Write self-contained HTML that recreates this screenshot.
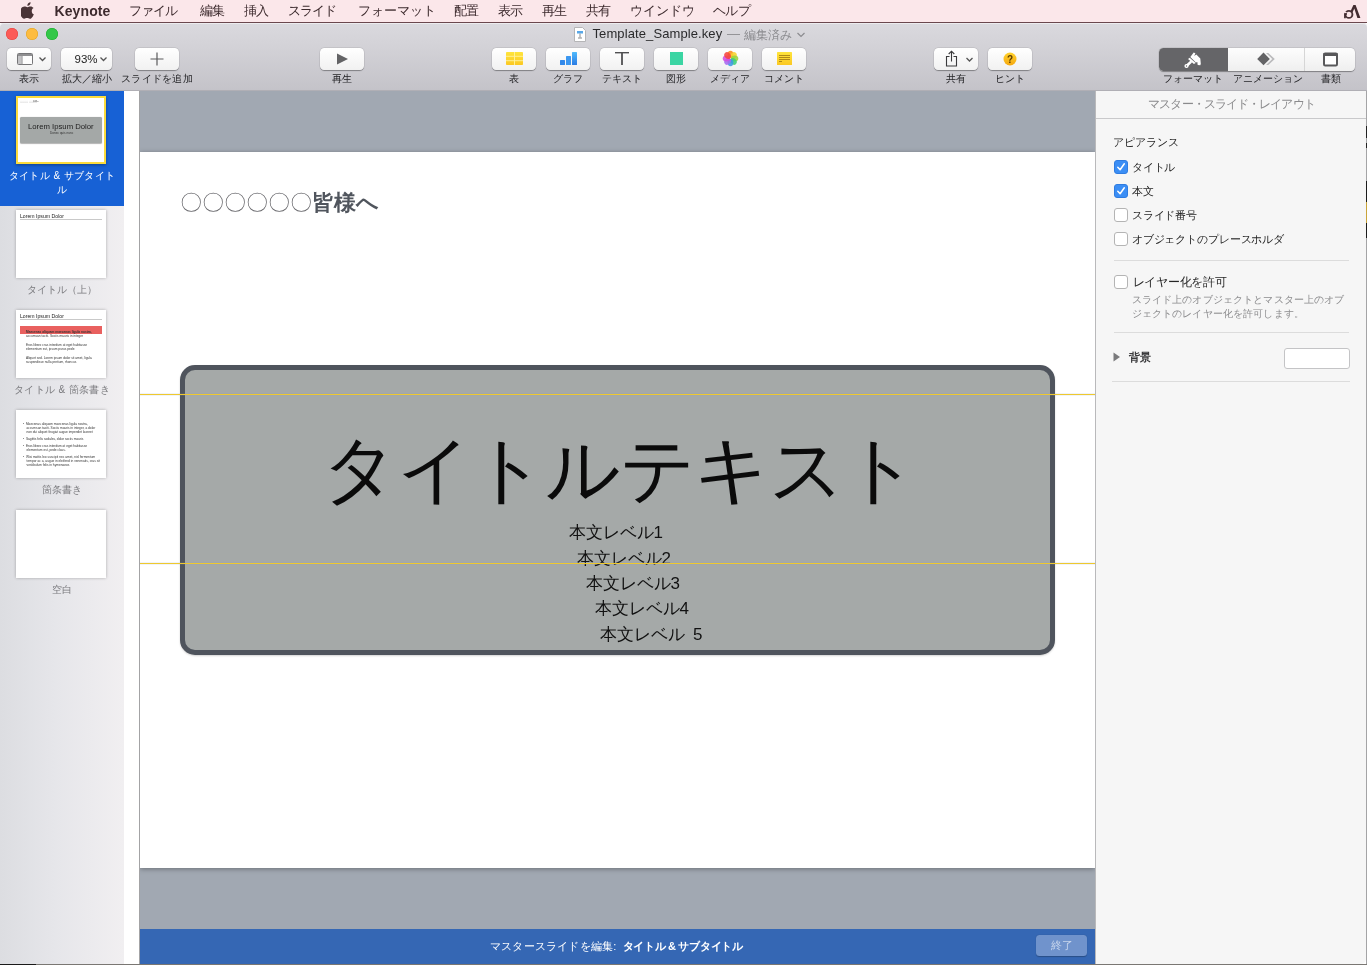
<!DOCTYPE html>
<html lang="ja">
<head>
<meta charset="utf-8">
<title>Keynote</title>
<style>
*{box-sizing:border-box;margin:0;padding:0}
html,body{width:1367px;height:965px;overflow:hidden;background:#fff}
body{font-family:"Liberation Sans",sans-serif;position:relative;color:#222;-webkit-font-smoothing:antialiased}
.abs{position:absolute}
/* menu bar */
#menubar{position:absolute;left:0;top:0;width:1367px;height:22px;background:#fbe7ea}
#menubar span{position:absolute;top:2px;font-size:13px;line-height:18px;color:#3d2b2e;white-space:nowrap}
#menuline{position:absolute;left:0;top:22px;width:1367px;height:1px;background:#6a474d}
/* window chrome */
#chrome{position:absolute;left:0;top:23px;width:1367px;height:68px;background:linear-gradient(#dad9de 0%,#d3d2d7 35%,#c4c3c9 100%);border-bottom:1px solid #b0afb5;box-shadow:inset 0 1px 0 #ececef;border-radius:4px 4px 0 0}
.tl{position:absolute;top:28px;width:12px;height:12px;border-radius:50%}
.tb{position:absolute;top:48px;height:22px;width:44px;border-radius:4.5px;background:linear-gradient(#ffffff,#f1f1f1);box-shadow:0 0.5px 1px rgba(0,0,0,.35),0 0 0 .5px rgba(0,0,0,.08)}
.tlabel{position:absolute;top:72px;font-size:10px;line-height:14px;color:#242427;white-space:nowrap;transform:translateX(-50%)}
.tb svg{position:absolute;left:0;top:0}
/* sidebar */
#sidebar{position:absolute;left:0;top:91px;width:124px;height:873px;background:linear-gradient(90deg,#dcdde1 0%,#e6e6ea 45%,#f1eff1 100%)}
#sel{position:absolute;left:0;top:0;width:124px;height:115px;background:#1761d5}
.thumb{position:absolute;left:16px;width:90px;height:68px;background:#fff;box-shadow:0 0 3px rgba(0,0,0,.28)}
.slabel{position:absolute;left:0;width:124px;text-align:center;font-size:10px;letter-spacing:.1px;word-spacing:1px;line-height:14px;color:#7a7a7e;white-space:nowrap}
/* canvas */
#gap{position:absolute;left:124px;top:91px;width:15px;height:873px;background:#fff}
#gapline{position:absolute;left:139px;top:91px;width:1px;height:873px;background:#a3a3a5}
#canvas{position:absolute;left:140px;top:91px;width:955px;height:873px;background:#a1a8b2;overflow:hidden}
#slide{position:absolute;left:0;top:61px;width:955px;height:716px;background:#fff;box-shadow:0 1px 5px rgba(0,0,0,.34)}
#box{position:absolute;left:40px;top:213px;width:875px;height:290px;border:5px solid #4f545d;border-radius:15px;background:#a5a9a8;box-shadow:0 1px 2px rgba(0,0,0,.18)}
.guide{position:absolute;left:0;width:955px;height:1px;background:#efc92e;box-shadow:0 0 0 .5px rgba(140,160,200,.25)}
#bbar{position:absolute;left:0;top:838px;width:955px;height:35px;background:#3567b4}
/* right panel */
#panel{position:absolute;left:1095px;top:91px;width:271px;height:873px;background:#f6f6f6;border-left:1px solid #b9b9bb;border-radius:0 0 5px 0}
.plabel{position:absolute;font-size:12px;line-height:16px;color:#262626;white-space:nowrap}
.cb{position:absolute;left:18px;width:14px;height:14px;border-radius:3px;background:#fff;border:1px solid #b4b4b4}
.cb.on{background:#3b8ef5;border-color:#2f7ce0}
.sep{position:absolute;left:18px;width:235px;height:1px;background:#dcdcdc}

.tiny{position:absolute;transform-origin:0 0;white-space:nowrap;color:#333;font-size:12px;line-height:15.400px}
.ttl{position:absolute;transform-origin:0 0;white-space:nowrap;color:#222}
#h1{position:absolute;left:40px;top:37px;font-size:22.400px;line-height:28px;white-space:nowrap;color:#50555d}
#h1 b{font-weight:bold}
#h1 i{font-style:normal;color:#66666a}
#big{position:absolute;left:0;top:278px;width:875px;text-align:center;font-size:73.500px;letter-spacing:-1.600px;text-indent:4.500px;line-height:80px;color:#0b0b0b;white-space:nowrap}
.lv{position:absolute;font-size:17px;letter-spacing:-.100px;line-height:24px;margin-top:1px;color:#111;white-space:nowrap}
#bbar .t{position:absolute;top:10px;font-size:11px;line-height:14px;color:#fff;white-space:nowrap}
#done{position:absolute;left:896px;top:6px;width:51px;height:21px;border-radius:3.500px;background:#7093cc;color:#c8d6ec;font-size:11px;line-height:21px;text-align:center;box-shadow:0 .5px 1px rgba(0,0,0,.25)}
</style>
</head>
<body><div id='wrap' style='position:absolute;left:0;top:0;width:1367px;height:965px;will-change:transform'>
<!-- MENU BAR -->
<div id="menubar">
<svg class="abs" style="left:21px;top:2px" width="14" height="17" viewBox="0 0 14 17"><path fill="#4a3437" d="M9.6 0.2c.1 1-.3 1.900-.85 2.550-.6.7-1.500 1.200-2.400 1.100-.1-.9.350-1.900.9-2.500C7.850.7 8.850.25 9.600.2zM12.900 12.300c-.4.900-.6 1.300-1.100 2.100-.7 1.100-1.700 2.400-2.900 2.400-1.100 0-1.400-.7-2.850-.7-1.500 0-1.800.7-2.900.7-1.200 0-2.150-1.200-2.850-2.300C-1.200 11.800-1.400 8.100.150 6.400c.8-1.200 2.100-1.900 3.300-1.900 1.250 0 2 .7 3.050.7 1 0 1.600-.7 3.050-.7 1.100 0 2.250.6 3.050 1.600-2.700 1.500-2.250 5.300.3 6.200z"/></svg>
<span style="left:54.500px;font-weight:bold;font-size:14px;letter-spacing:.1px">Keynote</span>
<span style="left:129px;letter-spacing:-1px">ファイル</span>
<span style="left:200px;letter-spacing:-1px">編集</span>
<span style="left:243.500px;letter-spacing:-.5px">挿入</span>
<span style="left:287.500px;letter-spacing:-.8px">スライド</span>
<span style="left:358px">フォーマット</span>
<span style="left:453.500px;letter-spacing:-.5px">配置</span>
<span style="left:497.500px;letter-spacing:-.5px">表示</span>
<span style="left:541.500px;letter-spacing:-.5px">再生</span>
<span style="left:585.500px;letter-spacing:-.5px">共有</span>
<span style="left:629.500px">ウインドウ</span>
<span style="left:712.500px;letter-spacing:-.5px">ヘルプ</span>
<svg class="abs" style="left:1342px;top:3px" width="22" height="17" viewBox="0 0 22 17"><circle cx="6.900" cy="11.400" r="3.500" fill="none" stroke="#4a3337" stroke-width="1.900"/><path d="M1.500 8.200l3.500 1-1.200 1.500z" fill="#fbe7ea"/><path d="M2.100 10.200h2.900v1.500h-1.200v3.600h-1.700z" fill="#432d31"/><path d="M8.500 8.200L11.400 2h2.200l4.800 13h-3L12.300 5.600 10.600 9.200z" fill="#432d31"/></svg>
</div>
<div id="menuline"></div>

<!-- WINDOW CHROME -->
<div id="chrome"></div>
<div class="tl" style="left:6px;background:#fc5b57;box-shadow:inset 0 0 0 .5px #e0443e"></div>
<div class="tl" style="left:26px;background:#fdbc40;box-shadow:inset 0 0 0 .5px #dea123"></div>
<div class="tl" style="left:46px;background:#33c748;box-shadow:inset 0 0 0 .5px #1aab29"></div>


<!-- TOOLBAR -->
<div class="tb" style="left:7px"><svg width="44" height="22"><rect x="10.500" y="5.500" width="15" height="11" rx="1" fill="#fdfdfd" stroke="#757577"/><rect x="11" y="6" width="14" height="2" fill="#8f8f91"/><rect x="11" y="8" width="3.500" height="8" fill="#c3c3c5"/><path d="M15 8v8.500" stroke="#8a8a8c" stroke-width="1"/><path d="M32.500 9.500l3 3 3-3" fill="none" stroke="#555" stroke-width="1.300"/></svg></div>
<div class="tb" style="left:61px;width:51px"><span style="position:absolute;left:13.500px;top:4px;font-size:11.500px;line-height:14px;color:#222">93%</span><svg width="51" height="22"><path d="M39.500 9.500l3 3 3-3" fill="none" stroke="#555" stroke-width="1.300"/></svg></div>
<div class="tb" style="left:135px"><svg width="44" height="22"><path d="M22 4.500v13M15.500 11h13" stroke="#5a5a5c" stroke-width="1.200"/></svg></div>
<div class="tb" style="left:320px"><svg width="44" height="22"><path d="M17 5.500l11 5.500-11 5.500z" fill="#636365"/></svg></div>
<div class="tb" style="left:492px"><svg width="44" height="22"><defs><linearGradient id="yg" x1="0" y1="0" x2="0" y2="1"><stop offset="0" stop-color="#fee43c"/><stop offset="1" stop-color="#fbc822"/></linearGradient><linearGradient id="bg2" x1="0" y1="0" x2="0" y2="1"><stop offset="0" stop-color="#4fbafc"/><stop offset="1" stop-color="#2a7be4"/></linearGradient></defs><rect x="14" y="4" width="17" height="13" rx=".8" fill="url(#yg)"/><path d="M14 8.300h17M14 12.700h17M22.500 4v13" stroke="#fff2a0" stroke-width=".9"/></svg></div>
<div class="tb" style="left:546px"><svg width="44" height="22"><rect x="14" y="12" width="5" height="5" rx=".5" fill="#3289ea"/><rect x="20" y="8" width="5" height="9" rx=".5" fill="#3b97f0"/><rect x="26" y="4" width="5" height="13" rx=".5" fill="url(#bg2)"/></svg></div>
<div class="tb" style="left:600px"><svg width="44" height="22"><path d="M15 4.700h14" stroke="#505052" stroke-width="1.400" fill="none"/><path d="M22 4.700v12.300" stroke="#505052" stroke-width="1.800" fill="none"/></svg></div>
<div class="tb" style="left:654px"><svg width="44" height="22"><rect x="16" y="4" width="13" height="13" fill="#3bd5a3"/></svg></div>
<div class="tb" style="left:708px"><svg width="44" height="22" viewBox="0 0 44 22"><g transform="translate(22.500,10.500)"><ellipse cx="0" cy="-4.100" rx="2.900" ry="3.700" fill="#fb8a1c" opacity=".88" transform="rotate(0)"/><ellipse cx="0" cy="-4.100" rx="2.900" ry="3.700" fill="#f8d22f" opacity=".88" transform="rotate(45)"/><ellipse cx="0" cy="-4.100" rx="2.900" ry="3.700" fill="#9ad43a" opacity=".88" transform="rotate(90)"/><ellipse cx="0" cy="-4.100" rx="2.900" ry="3.700" fill="#3ecf7c" opacity=".88" transform="rotate(135)"/><ellipse cx="0" cy="-4.100" rx="2.900" ry="3.700" fill="#3e9ae2" opacity=".88" transform="rotate(180)"/><ellipse cx="0" cy="-4.100" rx="2.900" ry="3.700" fill="#a66bf0" opacity=".88" transform="rotate(225)"/><ellipse cx="0" cy="-4.100" rx="2.900" ry="3.700" fill="#d04fe0" opacity=".88" transform="rotate(270)"/><ellipse cx="0" cy="-4.100" rx="2.900" ry="3.700" fill="#f6453f" opacity=".88" transform="rotate(315)"/></g></svg></div>
<div class="tb" style="left:762px"><svg width="44" height="22"><rect x="15" y="4" width="15" height="13" rx=".6" fill="url(#yg)"/><path d="M17 7.500h11M17 9.500h11M17 11.500h11M17 13.500h3" stroke="#9a7512" stroke-width=".8"/></svg></div>
<div class="tb" style="left:934px"><svg width="44" height="22"><path d="M15.500 8.500h-3v9.500h10v-9.500h-3" fill="none" stroke="#3a3a3c" stroke-width="1.100"/><path d="M17.500 13.500v-10M14.700 6l2.800-2.800 2.800 2.800" fill="none" stroke="#3a3a3c" stroke-width="1.100"/><path d="M32.500 10l3 3 3-3" fill="none" stroke="#555" stroke-width="1.300"/></svg></div>
<div class="tb" style="left:988px"><svg width="44" height="22"><defs><linearGradient id="hg" x1="0" y1="0" x2="0" y2="1"><stop offset="0" stop-color="#ffd22e"/><stop offset="1" stop-color="#f5a80f"/></linearGradient></defs><circle cx="22" cy="11" r="6.500" fill="url(#hg)"/><text x="22" y="14.500" font-size="10" font-weight="bold" text-anchor="middle" fill="#5b3c00" font-family="Liberation Sans, sans-serif">?</text></svg></div>
<div class="tb" id="seg" style="left:1159px;top:47.500px;height:23px;width:196px;background:linear-gradient(#fdfdfd,#efefef)"><div style="position:absolute;left:0;top:0;width:69px;height:23px;background:#656568;border-radius:4.500px 0 0 4.500px"></div><div style="position:absolute;left:145px;top:0;width:1px;height:23px;background:#d6d6d6"></div><svg width="196" height="23"><g fill="#fff"><path d="M31.300 9L34.700 4.400 36.400 5.300 35.200 8 37.300 6.500 41.300 10.500 41.800 15.800 41.300 17.200 38.700 17 38.300 14.100 36.900 14.400z"/><path d="M29 11L30.700 9.700 36.700 14.900 34.900 16z"/><path d="M31.600 14.100L27.500 18" stroke="#fff" stroke-width="2.600" stroke-linecap="round"/><circle cx="27.500" cy="18" r="2.100"/></g><circle cx="27.500" cy="18" r=".7" fill="#656568"/><path d="M104.500 4.600l6.300 6.300-6.300 6.300-6.300-6.300z" fill="#636365"/><path d="M109.300 4.900l6.500 6-6.500 6h-2.300l6.300-6-6.300-6z" fill="#bababc"/><rect x="165" y="5.500" width="13" height="12" rx="1.200" fill="#fff" stroke="#58585a" stroke-width="2"/><rect x="164.500" y="5" width="14" height="3" fill="#58585a"/></svg></div>

<div class="tlabel" style="left:29px">表示</div>
<div class="tlabel" style="left:86.500px">拡大／縮小</div>
<div class="tlabel" style="left:157px;letter-spacing:.3px">スライドを追加</div>
<div class="tlabel" style="left:342px">再生</div>
<div class="tlabel" style="left:514px">表</div>
<div class="tlabel" style="left:568px">グラフ</div>
<div class="tlabel" style="left:622px">テキスト</div>
<div class="tlabel" style="left:676px">図形</div>
<div class="tlabel" style="left:730px">メディア</div>
<div class="tlabel" style="left:784px">コメント</div>
<div class="tlabel" style="left:956px">共有</div>
<div class="tlabel" style="left:1010px">ヒント</div>
<div class="tlabel" style="left:1193px">フォーマット</div>
<div class="tlabel" style="left:1267.500px">アニメーション</div>
<div class="tlabel" style="left:1330.500px">書類</div>

<!-- TITLE -->
<svg class="abs" style="left:574px;top:27px" width="12" height="15" viewBox="0 0 12 15"><path d="M.5.500h8l3 3v11h-11z" fill="#fff" stroke="#b5b5b7"/><rect x="3" y="4" width="6" height="2.500" fill="#58a7e8"/><path d="M6 6.500v4M4 11h4" stroke="#8a8a8c" stroke-width="1"/></svg>
<div class="abs" style="left:592.500px;top:26px;font-size:13px;letter-spacing:.1px;line-height:16px;color:#2a2a2c;white-space:nowrap">Template_Sample.key</div><div class="abs" style="left:727px;top:26px;font-size:13px;line-height:16px;color:#8b8b8f;white-space:nowrap">—</div><div class="abs" style="left:744px;top:26.500px;font-size:12px;line-height:16px;color:#8b8b8f;white-space:nowrap">編集済み</div>
<svg class="abs" style="left:796px;top:30.500px" width="10" height="8"><path d="M1.500 2l3.500 3.500 3.500-3.500" fill="none" stroke="#8b8b8f" stroke-width="1.200"/></svg>

<!-- SIDEBAR -->
<div id="sidebar">
<div id="sel"></div>
<!-- thumb 1 -->
<div class="thumb" style="top:5px;border:2px solid #fbdb3c;box-shadow:0 1px 3px rgba(0,0,0,.35)">
 <div class="abs" style="left:2px;top:19px;width:82px;height:26px;background:#a4a8a7;border-radius:1.500px;box-shadow:0 .5px 1px rgba(0,0,0,.3)"></div>
 <div class="ttl" style="left:10px;top:23.800px;font-size:15px;line-height:18px;transform:scale(.515)">Lorem Ipsum Dolor</div>
 <div class="ttl" style="left:31.500px;top:33px;font-size:12px;line-height:14px;transform:scale(.26);color:#333">Donec quis nunc</div>
 <div class="ttl" style="left:2px;top:1.500px;font-size:12px;line-height:14px;transform:scale(.18);color:#666">〇〇〇〇〇〇<b>皆様へ</b></div>
</div>
<div class="slabel" style="top:78px;color:#fff;line-height:14px">タイトル &amp; サブタイト<br>ル</div>
<!-- thumb 2 -->
<div class="thumb" style="top:119px">
 <div class="ttl" style="left:4px;top:3px;font-size:12px;line-height:14px;transform:scale(.43)">Lorem Ipsum Dolor</div>
 <div class="abs" style="left:4px;top:9px;width:82px;height:1px;background:#c9c9c9"></div>
</div>
<div class="slabel" style="top:192px">タイトル（上）</div>
<!-- thumb 3 -->
<div class="thumb" style="top:219px">
 <div class="ttl" style="left:4px;top:3px;font-size:12px;line-height:14px;transform:scale(.43)">Lorem Ipsum Dolor</div>
 <div class="abs" style="left:4px;top:9px;width:82px;height:1px;background:#c9c9c9"></div>
 <div class="abs" style="left:4px;top:16px;width:82px;height:8px;background:#e9605f"></div>
 <div class="tiny" style="left:10px;top:19.500px;transform:scale(.268,.25)"><b>Maecenas aliquam maecenas ligula nostra,</b><br>accumsan taciti. Sociis mauris in integer</div>
 <div class="tiny" style="left:10px;top:32.500px;transform:scale(.268,.25)">Eros libero cras interdum at eget habitasse<br>elementum est, ipsum purus pede</div>
 <div class="tiny" style="left:10px;top:45.500px;transform:scale(.268,.25)">Aliquet sed. Lorem ipsum dolor sit amet, ligula<br>suspendisse nulla pretium, rhoncus</div>
</div>
<div class="slabel" style="top:292px">タイトル &amp; 箇条書き</div>
<!-- thumb 4 -->
<div class="thumb" style="top:319px">
 <div class="tiny" style="left:7px;top:11.800px;transform:scale(.268,.25)">•&nbsp;&nbsp;Maecenas aliquam maecenas ligula nostra,<br>&nbsp;&nbsp;&nbsp;&nbsp;accumsan taciti. Sociis mauris in integer, a dolor<br>&nbsp;&nbsp;&nbsp;&nbsp;non dui aliquet feugiat augue imperdiet laoreet</div>
 <div class="tiny" style="left:7px;top:26.800px;transform:scale(.268,.25)">•&nbsp;&nbsp;Sagittis felis sodales, dolor sociis mauris</div>
 <div class="tiny" style="left:7px;top:34.100px;transform:scale(.268,.25)">•&nbsp;&nbsp;Eros libero cras interdum at eget habitasse<br>&nbsp;&nbsp;&nbsp;&nbsp;elementum est, pede class.</div>
 <div class="tiny" style="left:7px;top:45px;transform:scale(.268,.25)">•&nbsp;&nbsp;Wisi mattis leo suscipit nec amet, nisl fermentum<br>&nbsp;&nbsp;&nbsp;&nbsp;tempor ac a, augue in eleifend in venenatis, cras sit<br>&nbsp;&nbsp;&nbsp;&nbsp;vestibulum felis in hymenaeos</div>
</div>
<div class="slabel" style="top:392px">箇条書き</div>
<!-- thumb 5 -->
<div class="thumb" style="top:419px"></div>
<div class="slabel" style="top:492px">空白</div>
</div>
<div id="gap"></div><div id="gapline"></div>

<!-- CANVAS -->
<div id="canvas">
<div id="slide">
<div id="h1"><i>〇〇〇〇〇〇</i><b>皆様へ</b></div>
<div id="box"></div>
<div class="abs" style="left:40px;top:0;width:875px"><div id="big">タイトルテキスト</div></div>
<div class="lv" style="left:429px;top:368px">本文レベル1</div>
<div class="lv" style="left:437px;top:394px">本文レベル2</div>
<div class="lv" style="left:446px;top:419px">本文レベル3</div>
<div class="lv" style="left:455px;top:444px">本文レベル4</div>
<div class="lv" style="left:460px;top:470px;word-spacing:4px">本文レベル 5</div>
</div>
<div class="guide" style="top:303px"></div>
<div class="guide" style="top:472px"></div>
<div id="bbar"><div class="t" style="left:350px;letter-spacing:.2px">マスタースライドを編集:</div><div class="t" style="left:482.500px;font-weight:bold;letter-spacing:-.3px">タイトル &amp; サブタイトル</div><div id="done">終了</div></div>
</div>

<!-- RIGHT PANEL -->
<div id="panel">
<div class="abs" style="left:0;top:0;width:271px;height:27px;text-align:center;font-size:11.500px;letter-spacing:-.9px;line-height:27px;color:#8a8a8c">マスター・スライド・レイアウト</div>
<div class="abs" style="left:0;top:27px;width:271px;height:1px;background:#c9c9cb"></div>
<div class="plabel" style="left:17px;top:43px;font-size:11px">アピアランス</div>
<div class="cb on" style="top:69px"><svg width="12" height="12" style="position:absolute;left:0;top:0"><path d="M2.800 6.300l2.300 2.500 4.200-6" fill="none" stroke="#fff" stroke-width="1.500" stroke-linecap="round" stroke-linejoin="round"/></svg></div>
<div class="plabel" style="left:35.800px;top:68px;font-size:11px;letter-spacing:-.12px;margin-top:-.5px">タイトル</div>
<div class="cb on" style="top:93px"><svg width="12" height="12" style="position:absolute;left:0;top:0"><path d="M2.800 6.300l2.300 2.500 4.200-6" fill="none" stroke="#fff" stroke-width="1.500" stroke-linecap="round" stroke-linejoin="round"/></svg></div>
<div class="plabel" style="left:35.800px;top:92px;font-size:11px;letter-spacing:-.12px;margin-top:-.5px">本文</div>
<div class="cb" style="top:117px"></div>
<div class="plabel" style="left:35.800px;top:116px;font-size:11px;letter-spacing:-.12px;margin-top:-.5px">スライド番号</div>
<div class="cb" style="top:141px"></div>
<div class="plabel" style="left:35.800px;top:140px;font-size:11px;letter-spacing:-.12px;margin-top:-.5px">オブジェクトのプレースホルダ</div>
<div class="sep" style="top:169px"></div>
<div class="cb" style="top:184px"></div>
<div class="plabel" style="left:36.800px;top:183px;font-size:12px;letter-spacing:-.3px">レイヤー化を許可</div>
<div class="plabel" style="left:35.500px;top:202px;font-size:10px;letter-spacing:.15px;line-height:13.700px;color:#8c8c8e">スライド上のオブジェクトとマスター上のオブ<br>ジェクトのレイヤー化を許可します。</div>
<div class="sep" style="top:241px"></div>
<svg class="abs" style="left:17px;top:261px" width="8" height="10"><path d="M.5.500l6.500 4.500-6.500 4.500z" fill="#7a7a7c"/></svg>
<div class="plabel" style="left:33px;top:258px;font-size:11px;font-weight:bold;color:#3a3a3c">背景</div>
<div class="abs" style="left:188px;top:257px;width:66px;height:21px;border:1px solid #c4c4c6;border-radius:3px;background:#fff"></div>
<div class="sep" style="top:290px;left:16px;width:238px"></div>
</div>
<!-- window edges (desktop peeking through) -->
<div class="abs" style="left:1366px;top:91px;width:1px;height:873px;background:#a4a4a6"></div>
<div class="abs" style="left:1366px;top:126px;width:1px;height:12px;background:#222"></div>
<div class="abs" style="left:1366px;top:143px;width:1px;height:5px;background:#222"></div>
<div class="abs" style="left:1366px;top:181px;width:1px;height:21px;background:#1c1c1c"></div>
<div class="abs" style="left:1366px;top:202px;width:1px;height:21px;background:#c9a43a"></div>
<div class="abs" style="left:1366px;top:223px;width:1px;height:15px;background:#1c1c1c"></div>
<div class="abs" style="left:0;top:964px;width:1367px;height:1px;background:#7a7773"></div>
<div class="abs" style="left:0;top:964px;width:36px;height:1px;background:#1a1a1a"></div>
</div></body>
</html>
